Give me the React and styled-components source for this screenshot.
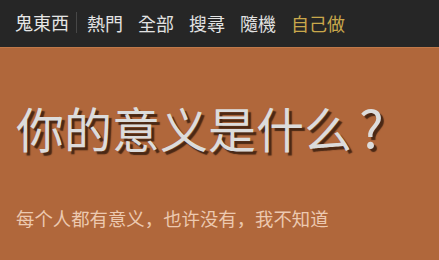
import React from 'react';
import styled, { createGlobalStyle } from 'styled-components';

const GlobalStyle = createGlobalStyle`
  html, body {
    margin: 0;
    padding: 0;
    background: #b0673b;
  }
  body {
    font-family: "Noto Sans CJK SC", "Noto Sans CJK TC", "Noto Sans", sans-serif;
  }
`;

const Page = styled.div`
  width: 439px;
  height: 260px;
  background: #b0673b;
  overflow: hidden;
`;

const NavBar = styled.nav`
  display: flex;
  align-items: center;
  height: 48px;
  padding: 0 0 2px 15px;
  background: #262626;
  border-bottom: 1px solid #bf7849;
  box-sizing: border-box;
`;

const Brand = styled.span`
  font-family: "Noto Sans CJK TC", sans-serif;
  font-size: 18px;
  color: #e6e6e6;
  padding-right: 7px;
  border-right: 1px solid #474747;
  line-height: 21px;
`;

const NavLink = styled.span`
  font-family: "Noto Sans CJK TC", sans-serif;
  font-size: 18px;
  margin-left: ${p => (p.first ? '10px' : '15px')};
  color: ${p => (p.active ? '#c9a84c' : '#e2e2e2')};
`;

const Hero = styled.section`
  padding: 46px 0 0 16px;
`;

const Title = styled.h1`
  margin: 0;
  font-size: 48px;
  font-weight: 400;
  line-height: 64px;
  color: #dcdcdc;
  text-shadow: 3px 3px 1px #4a2815;
`;

const Question = styled.span`
  display: inline-block;
  margin-left: 7px;
  font-size: 52px;
`;

const Subtitle = styled.p`
  margin: 47px 0 0;
  font-size: 18.4px;
  line-height: 24px;
  color: #ecc9b0;
`;

const links = ['熱門', '全部', '搜尋', '隨機', '自己做'];

const App = () => {
  return (
    <Page>
      <GlobalStyle />
      <NavBar>
        <Brand>鬼東西</Brand>
        {links.map((label, i) => (
          <NavLink key={label} first={i === 0} active={label === '自己做'}>
            {label}
          </NavLink>
        ))}
      </NavBar>
      <Hero>
        <Title>
          你的意义是什么<Question>?</Question>
        </Title>
        <Subtitle>每个人都有意义，也许没有，我不知道</Subtitle>
      </Hero>
    </Page>
  );
};

export default App;
